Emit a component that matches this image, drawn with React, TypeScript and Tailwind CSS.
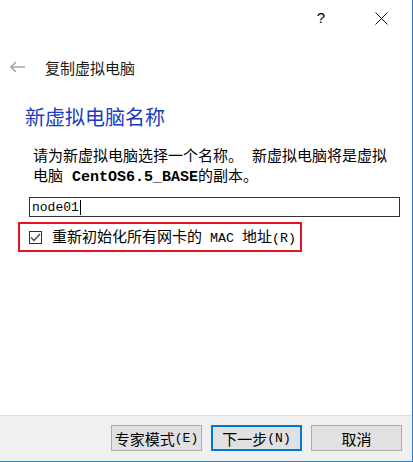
const cjk = "font-['Noto_Sans_CJK_SC',sans-serif]";
const mono = "font-['Liberation_Mono','Noto_Sans_CJK_SC',monospace]";

function FooterButton({ label, primary }: { label: React.ReactNode; primary?: boolean }) {
  return (
    <button
      className={`flex h-[26px] w-[91px] items-center justify-center bg-[#e1e1e1] text-[15px] leading-none text-black ${
        primary ? "border-2 border-[#0078d7]" : "border border-[#adadad]"
      }`}
    >
      {label}
    </button>
  );
}

export default function App() {
  return (
    <div className={`flex h-[462px] w-[413px] flex-col border-r border-b border-[#2b7fd3] bg-white ${cjk}`}>
      {/* caption buttons */}
      <div className="flex h-[36px] items-center justify-end pr-[24px] text-black">
        <span className="mr-[50px] font-['Liberation_Sans',sans-serif] text-[15px]">?</span>
        <svg width="13" height="13" viewBox="0 0 13 13" className="mt-[1px]">
          <path d="M0.5 0.5 L12.5 12.5 M12.5 0.5 L0.5 12.5" stroke="#111" strokeWidth="1" />
        </svg>
      </div>

      {/* wizard title */}
      <div className="flex h-[30px] items-center mt-[16px]">
        <svg width="16" height="12" viewBox="0 0 16 12" className="ml-[10px]">
          <path d="M1 6 H15 M6 1 L1 6 L6 11" stroke="#a8a8a8" strokeWidth="1.6" fill="none" />
        </svg>
        <span className="ml-[19px] text-[15px] leading-none text-[#1a1a1a]">复制虚拟电脑</span>
      </div>

      <div className="px-[25px]">
        <h1 className="mt-[21px] text-[20px] leading-[28px] text-[#1a3cc0]">新虚拟电脑名称</h1>
        <p className={`mt-[17px] ml-[8px] text-[15px] leading-[20px] text-black ${mono}`}>
          请为新虚拟电脑选择一个名称。 新虚拟电脑将是虚拟
          <br />
          电脑 <b>CentOS6.5_BASE</b>的副本。
        </p>
      </div>

      <div className="mt-[9px] ml-[29px] flex h-[20px] w-[371px] items-center border border-[#333] px-[2px]">
        <span className={`text-[13px] leading-none text-black ${mono}`}>node01</span>
        <span className="ml-[1px] h-[15px] w-[1px] bg-black" />
      </div>

      <div className="mt-[5px] ml-[18px] flex h-[30px] w-[284px] items-center border-2 border-[#e81123] pl-[9px]">
        <span className="flex h-[13px] w-[13px] items-center justify-center border border-[#333] bg-white">
          <svg width="11" height="9" viewBox="0 0 11 9">
            <path d="M1 4.5 L4 7.5 L10 1" stroke="#444" strokeWidth="1.3" fill="none" />
          </svg>
        </span>
        <span className="ml-[10px] text-[15px] leading-none text-black">
          重新初始化所有网卡的
          <span className={`text-[13.3px] ${mono}`}> MAC </span>
          地址<span className={`text-[13.3px] ${mono}`}>(R)</span>
        </span>
      </div>

      <div className="flex-1" />

      <div className="flex h-[46px] justify-end gap-[9px] border-t border-[#dfdfdf] bg-[#f0f0f0] pt-[9px] pr-[10px]">
        <FooterButton
          label={
            <>
              专家模式<span className={`text-[13px] ${mono}`}>(E)</span>
            </>
          }
        />
        <FooterButton
          primary
          label={
            <>
              下一步<span className={`text-[13px] ${mono}`}>(N)</span>
            </>
          }
        />
        <FooterButton label="取消" />
      </div>
    </div>
  );
}
